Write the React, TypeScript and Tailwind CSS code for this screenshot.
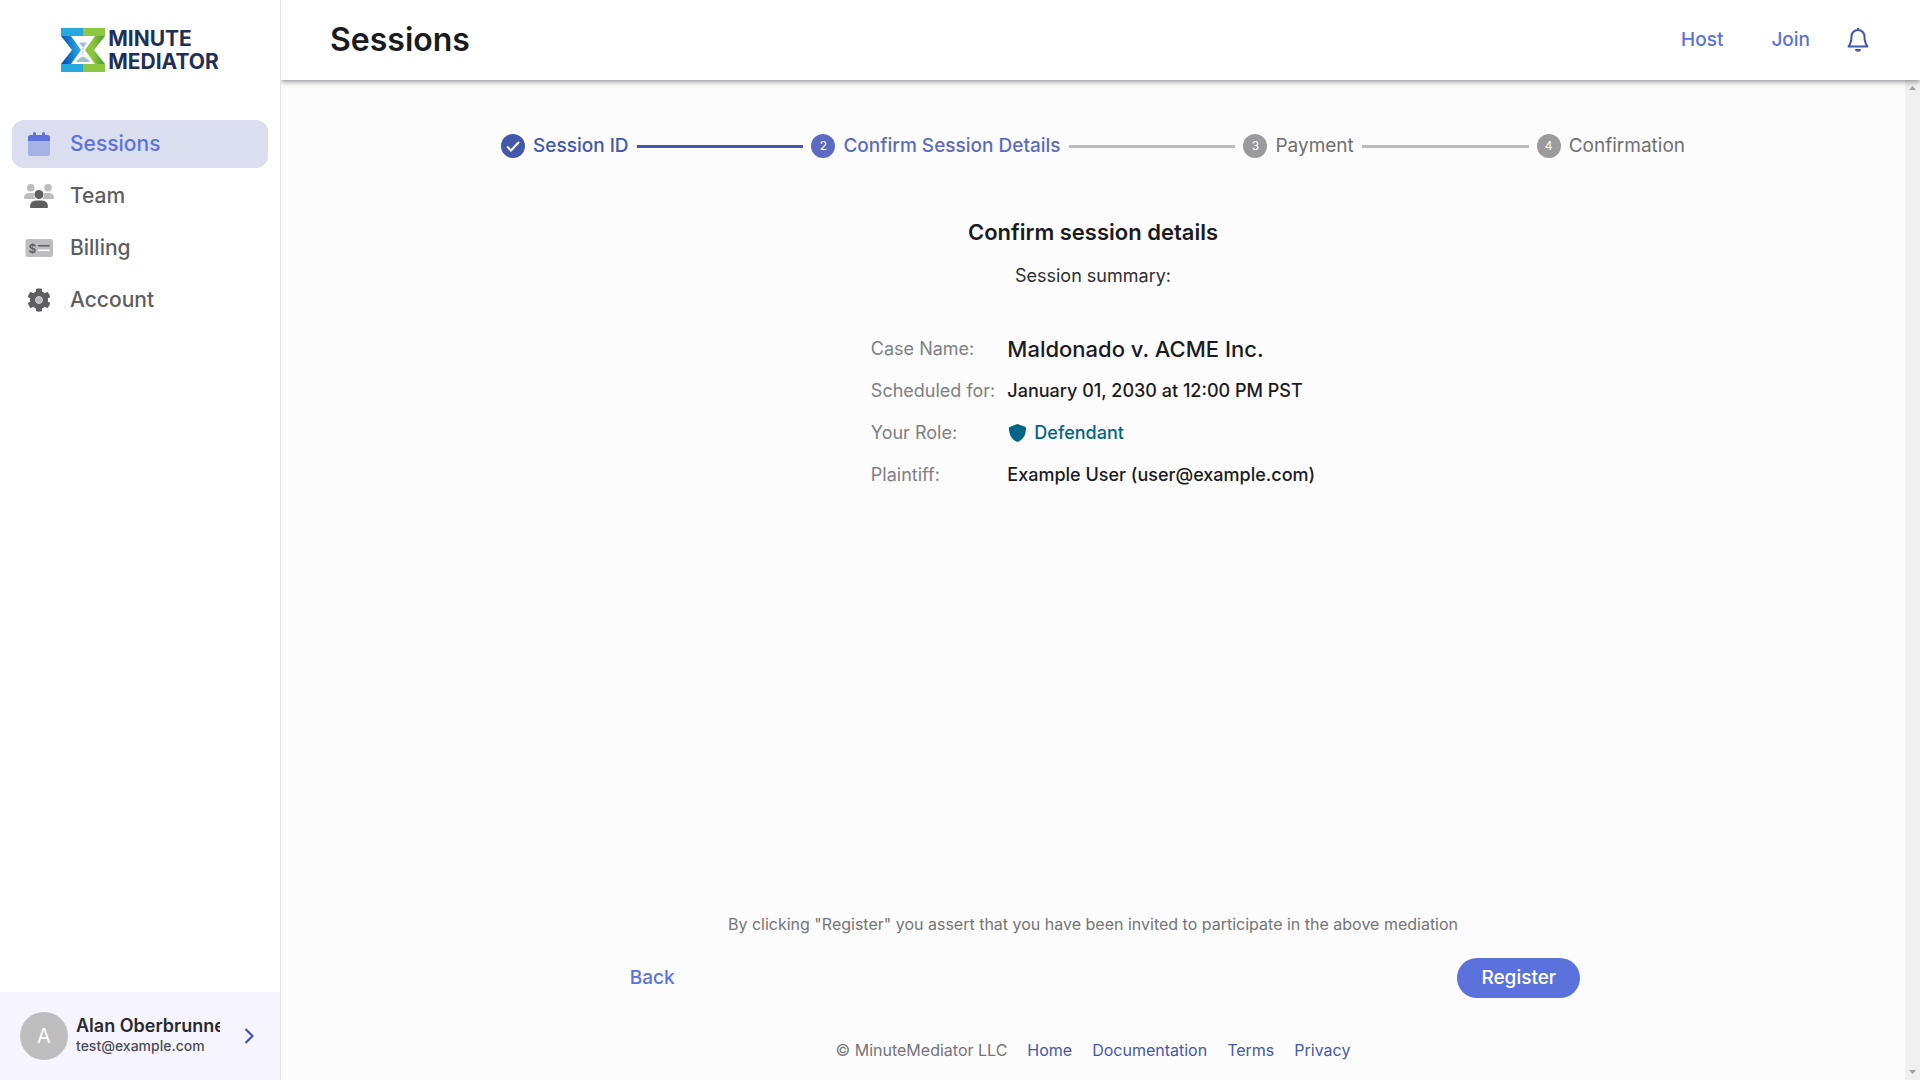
import type { ReactNode } from "react";
import { FaCog } from "react-icons/fa";

function Logo() {
  return (
    <a href="#home" aria-label="Minute Mediator" className="flex h-11 items-center gap-[3px]">
      <svg width="44" height="44" viewBox="0 0 44 44" aria-hidden="true">
        <defs>
          <linearGradient id="logo-blue" x1="0" x2="1" y1="0.600" y2="0.400">
            <stop offset="0.1" stopColor="#0a50b4" />
            <stop offset="0.9" stopColor="#27a9e0" />
          </linearGradient>
          <linearGradient id="logo-green" x1="0" x2="1" y1="0" y2="0">
            <stop offset="0.4" stopColor="#8dc63f" />
            <stop offset="1" stopColor="#3f9a2c" />
          </linearGradient>
        </defs>
        <path d="M0 8h10l10 14L10 36H0l11-14z" fill="url(#logo-blue)" />
        <path d="M44 8H34L24 22l10 14h10L33 22z" fill="url(#logo-green)" />
        <path d="M0 0h22v8H0zM0 36h22v8H0z" fill="#27a9e0" />
        <path d="M22 0h22v8H22zM22 36h22v8H22z" fill="#8dc63f" />
        <path d="M18 14.500h8l-4 5.500zM15 34q1-3 7-5.500 6 2.500 7 5.500z" fill="#a3bfcd" />
        <path d="M22 20v7" stroke="#a3bfcd" strokeDasharray="2 1" />
      </svg>
      <span className="flex flex-col text-[21px] font-bold leading-[23px] text-[#1f2f56]">
        <span>MINUTE</span>
        <span>MEDIATOR</span>
      </span>
    </a>
  );
}

function CalendarIcon() {
  return (
    <svg width="30" height="30" viewBox="0 0 30 30" fill="#5b72dd" aria-hidden="true">
      <path d="M4 12h22v13a2 2 0 0 1-2 2H6a2 2 0 0 1-2-2z" fill="#a6b1e6" />
      <path d="M4 12V8.500Q4 6 6.500 6H9V4.500q0-1.500 1.500-1.500T12 4.500V6h6V4.500q0-1.500 1.500-1.500T21 4.500V6h2.500Q26 6 26 8.500V12z" />
    </svg>
  );
}

function TeamIcon() {
  return (
    <svg width="30" height="30" viewBox="0 0 30 30" aria-hidden="true">
      <g fill="#bdbdbf">
        <circle cx="6.700" cy="6.800" r="3.800" />
        <circle cx="24" cy="6.800" r="3.800" />
        <path d="M0 17q0-5 5-5h3.500q1 0 1.500.5-.3 3.500 1.700 5.500H1q-1 0-1-1zM30 17q0-5-5-5h-3.500q-1 0-1.500.5.3 3.500-1.700 5.500H29q1 0 1-1z" />
      </g>
      <g fill="#5d5d62">
        <circle cx="15" cy="13.500" r="4.500" />
        <path d="M6 26q0-6.500 6-6.500h6q6 0 6 6.500 0 1-1 1H7q-1 0-1-1z" />
      </g>
    </svg>
  );
}

function BillingIcon() {
  return (
    <svg width="30" height="30" viewBox="0 0 30 30" aria-hidden="true">
      <rect x="1.500" y="6" width="27.500" height="18" rx="2.500" fill="#bdbdbf" />
      <text x="8.300" y="19.500" textAnchor="middle" fontSize="12" fontWeight="600" fill="#5d5d62">$</text>
      <path d="M14.500 12.700h10.500" stroke="#5d5d62" strokeWidth="1.500" strokeLinecap="round" />
      <path d="M14.500 17.300h10.500" stroke="#fff" strokeWidth="1.500" strokeLinecap="round" />
    </svg>
  );
}

function AccountIcon() {
  return (
    <svg width="30" height="30" viewBox="0 0 30 30" aria-hidden="true">
      <FaCog x="3" y="3" size={24} color="#5d5d62" />
      <circle cx="15" cy="15" r="3.300" fill="#bdbdbf" />
    </svg>
  );
}

function NavItem({ icon, label, active }: { icon: ReactNode; label: string; active?: boolean }) {
  return (
    <a
      href={"#" + label.toLowerCase()}
      aria-current={active ? "page" : undefined}
      className={
        active
          ? "flex h-12 items-center gap-4 rounded-xl bg-[#dbdeef] px-3 text-[#5b72dd]"
          : "flex h-12 items-center gap-4 rounded-xl px-3 text-[#5d5d62]"
      }
    >
      {icon}
      <span className="text-[21px] font-medium">{label}</span>
    </a>
  );
}

function Sidebar() {
  return (
    <aside className="relative z-20 flex w-[281px] shrink-0 flex-col border-r border-[#e4e4e6] bg-white">
      <div className="flex justify-center pt-7">
        <Logo />
      </div>
      <nav className="mt-12 flex flex-col gap-1 px-3">
        <NavItem icon={<CalendarIcon />} label="Sessions" active />
        <NavItem icon={<TeamIcon />} label="Team" />
        <NavItem icon={<BillingIcon />} label="Billing" />
        <NavItem icon={<AccountIcon />} label="Account" />
      </nav>
      <button type="button" className="mt-auto flex h-[88px] items-center bg-[#f6f5ff] px-5 text-left">
        <span className="flex size-12 shrink-0 items-center justify-center rounded-full bg-[#bdbdbd] text-xl text-white">A</span>
        <span className="ml-2 flex w-36 flex-col overflow-hidden whitespace-nowrap">
          <span className="text-lg font-semibold leading-5 text-[#2a2a2e]">Alan Oberbrunner</span>
          <span className="text-sm font-medium leading-5 text-[#4c4c51]">test@example.com</span>
        </span>
        <svg className="ml-6" width="12" height="18" viewBox="0 0 12 18" fill="none" stroke="#4458ab" strokeWidth="2.200" aria-hidden="true">
          <path d="M1.500 2l7 7-7 7" />
        </svg>
      </button>
    </aside>
  );
}

function Header() {
  return (
    <header className="relative z-10 flex h-20 shrink-0 items-center bg-white pl-[49px] pr-[50px] shadow-[0_2px_4px_-1px_rgba(27,31,40,0.3),0_3px_5px_0_rgba(27,31,40,0.2)]">
      <h1 className="text-[32px] font-semibold text-[#1b1b1f]">Sessions</h1>
      <nav className="ml-auto flex items-center text-[19px] font-medium text-[#5b72dd]">
        <a href="#host">Host</a>
        <a href="#join" className="ml-12">Join</a>
      </nav>
      <button type="button" aria-label="Notifications" className="ml-9">
        <svg width="24" height="26" viewBox="0 0 24 26" fill="none" stroke="#4458ab" strokeWidth="2" strokeLinejoin="round" aria-hidden="true">
          <path d="M12 1v2M12 3C8 3 5.500 6 5.500 9.500 5.500 14.500 4.800 16.500 2.500 19.500h19c-2.300-3-3-5-3-10C18.500 6 16 3 12 3z" />
          <path d="M9 22h6a3 2.800 0 0 1-6 0z" fill="#4458ab" stroke="none" />
        </svg>
      </button>
    </header>
  );
}

function StepBadge({ className, children }: { className: string; children: ReactNode }) {
  return (
    <span className={"flex size-6 items-center justify-center rounded-full text-xs font-normal text-white " + className}>{children}</span>
  );
}

function Stepper() {
  return (
    <ol className="flex w-full max-w-[1200px] items-center gap-2 px-2 text-[19px] leading-6 text-[#6f6f72]">
      <li className="flex items-center gap-2 font-medium text-[#4458ab]">
        <StepBadge className="bg-[#4458ab]">
          <svg width="16" height="16" viewBox="0 0 16 16" fill="none" stroke="#fff" strokeWidth="2" aria-hidden="true">
            <path d="M2 8.500l4 4L14 4" />
          </svg>
        </StepBadge>
        Session ID
      </li>
      <li aria-hidden="true" className="h-[3px] flex-1 bg-[#4458ab]" />
      <li aria-current="step" className="flex items-center gap-2 font-medium text-[#5c6bc0]">
        <StepBadge className="bg-[#5c6bc0]">2</StepBadge>
        Confirm Session Details
      </li>
      <li aria-hidden="true" className="h-[3px] flex-1 bg-[#bdbdbd]" />
      <li className="flex items-center gap-2">
        <StepBadge className="bg-[#9b9b9b]">3</StepBadge>
        Payment
      </li>
      <li aria-hidden="true" className="h-[3px] flex-1 bg-[#bdbdbd]" />
      <li className="flex items-center gap-2">
        <StepBadge className="bg-[#9b9b9b]">4</StepBadge>
        Confirmation
      </li>
    </ol>
  );
}

function Summary() {
  return (
    <dl className="mt-[45px] grid grid-cols-[auto_auto] items-center gap-x-3 gap-y-[14px] text-lg leading-7 text-[#1b1b1f] [&>dt]:text-[#808083] [&>dd]:font-medium">
      <dt>Case Name:</dt>
      <dd className="text-[22px]">Maldonado v. ACME Inc.</dd>
      <dt>Scheduled for:</dt>
      <dd>January 01, 2030 at 12:00 PM PST</dd>
      <dt>Your Role:</dt>
      <dd className="flex items-center gap-2 pl-0.5 text-[#006687]">
        <svg width="17" height="18" viewBox="0 0 17 18" fill="currentColor" aria-hidden="true">
          <path d="M8.500 0L16 2.800q1 .4 1 1.500C17 11 14 15.800 9.200 17.800q-.7.300-1.400 0C3 15.800 0 11 0 4.300q0-1.100 1-1.500z" />
        </svg>
        Defendant
      </dd>
      <dt>Plaintiff:</dt>
      <dd>Example User (user@example.com)</dd>
    </dl>
  );
}

function ScrollTrack() {
  return (
    <div aria-hidden="true" className="flex w-[15px] shrink-0 flex-col items-center justify-between bg-[#f0f0f0] py-[6px]">
      <svg width="7" height="4" viewBox="0 0 7 4" fill="#a3a3a3"><path d="M3.500 0L7 4H0z" /></svg>
      <svg width="7" height="4" viewBox="0 0 7 4" fill="#a3a3a3"><path d="M3.500 4L7 0H0z" /></svg>
    </div>
  );
}

export default function App() {
  return (
    <div className="flex min-h-screen font-['Inter',sans-serif]">
      <Sidebar />
      <div className="flex min-w-0 flex-1 flex-col">
        <Header />
        <div className="flex flex-1">
          <main className="flex min-w-0 flex-1 flex-col items-center bg-[#fcfcfc] pt-[54px]">
            <Stepper />
            <h2 className="mt-[60px] text-[22px] font-semibold leading-7 text-[#1b1b1f]">Confirm session details</h2>
            <p className="mt-4 text-lg leading-7 text-[#2f2f33]">Session summary:</p>
            <Summary />
            <p className="mt-auto text-base leading-6 text-[#757578]">
              By clicking "Register" you assert that you have been invited to participate in the above mediation
            </p>
            <div className="mt-[22px] flex w-3/5 items-center justify-between text-[19px] font-medium">
              <button type="button" className="h-10 rounded-full px-6 text-[#5b72dd]">Back</button>
              <button type="button" className="h-10 rounded-full bg-[#5b72dd] px-6 text-white">Register</button>
            </div>
            <footer className="mb-[18px] mt-10 flex gap-5 text-base leading-6 text-[#4458ab]">
              <span className="text-[#757578]">© MinuteMediator LLC</span>
              <a href="#home">Home</a>
              <a href="#documentation">Documentation</a>
              <a href="#terms">Terms</a>
              <a href="#privacy">Privacy</a>
            </footer>
          </main>
          <ScrollTrack />
        </div>
      </div>
    </div>
  );
}
